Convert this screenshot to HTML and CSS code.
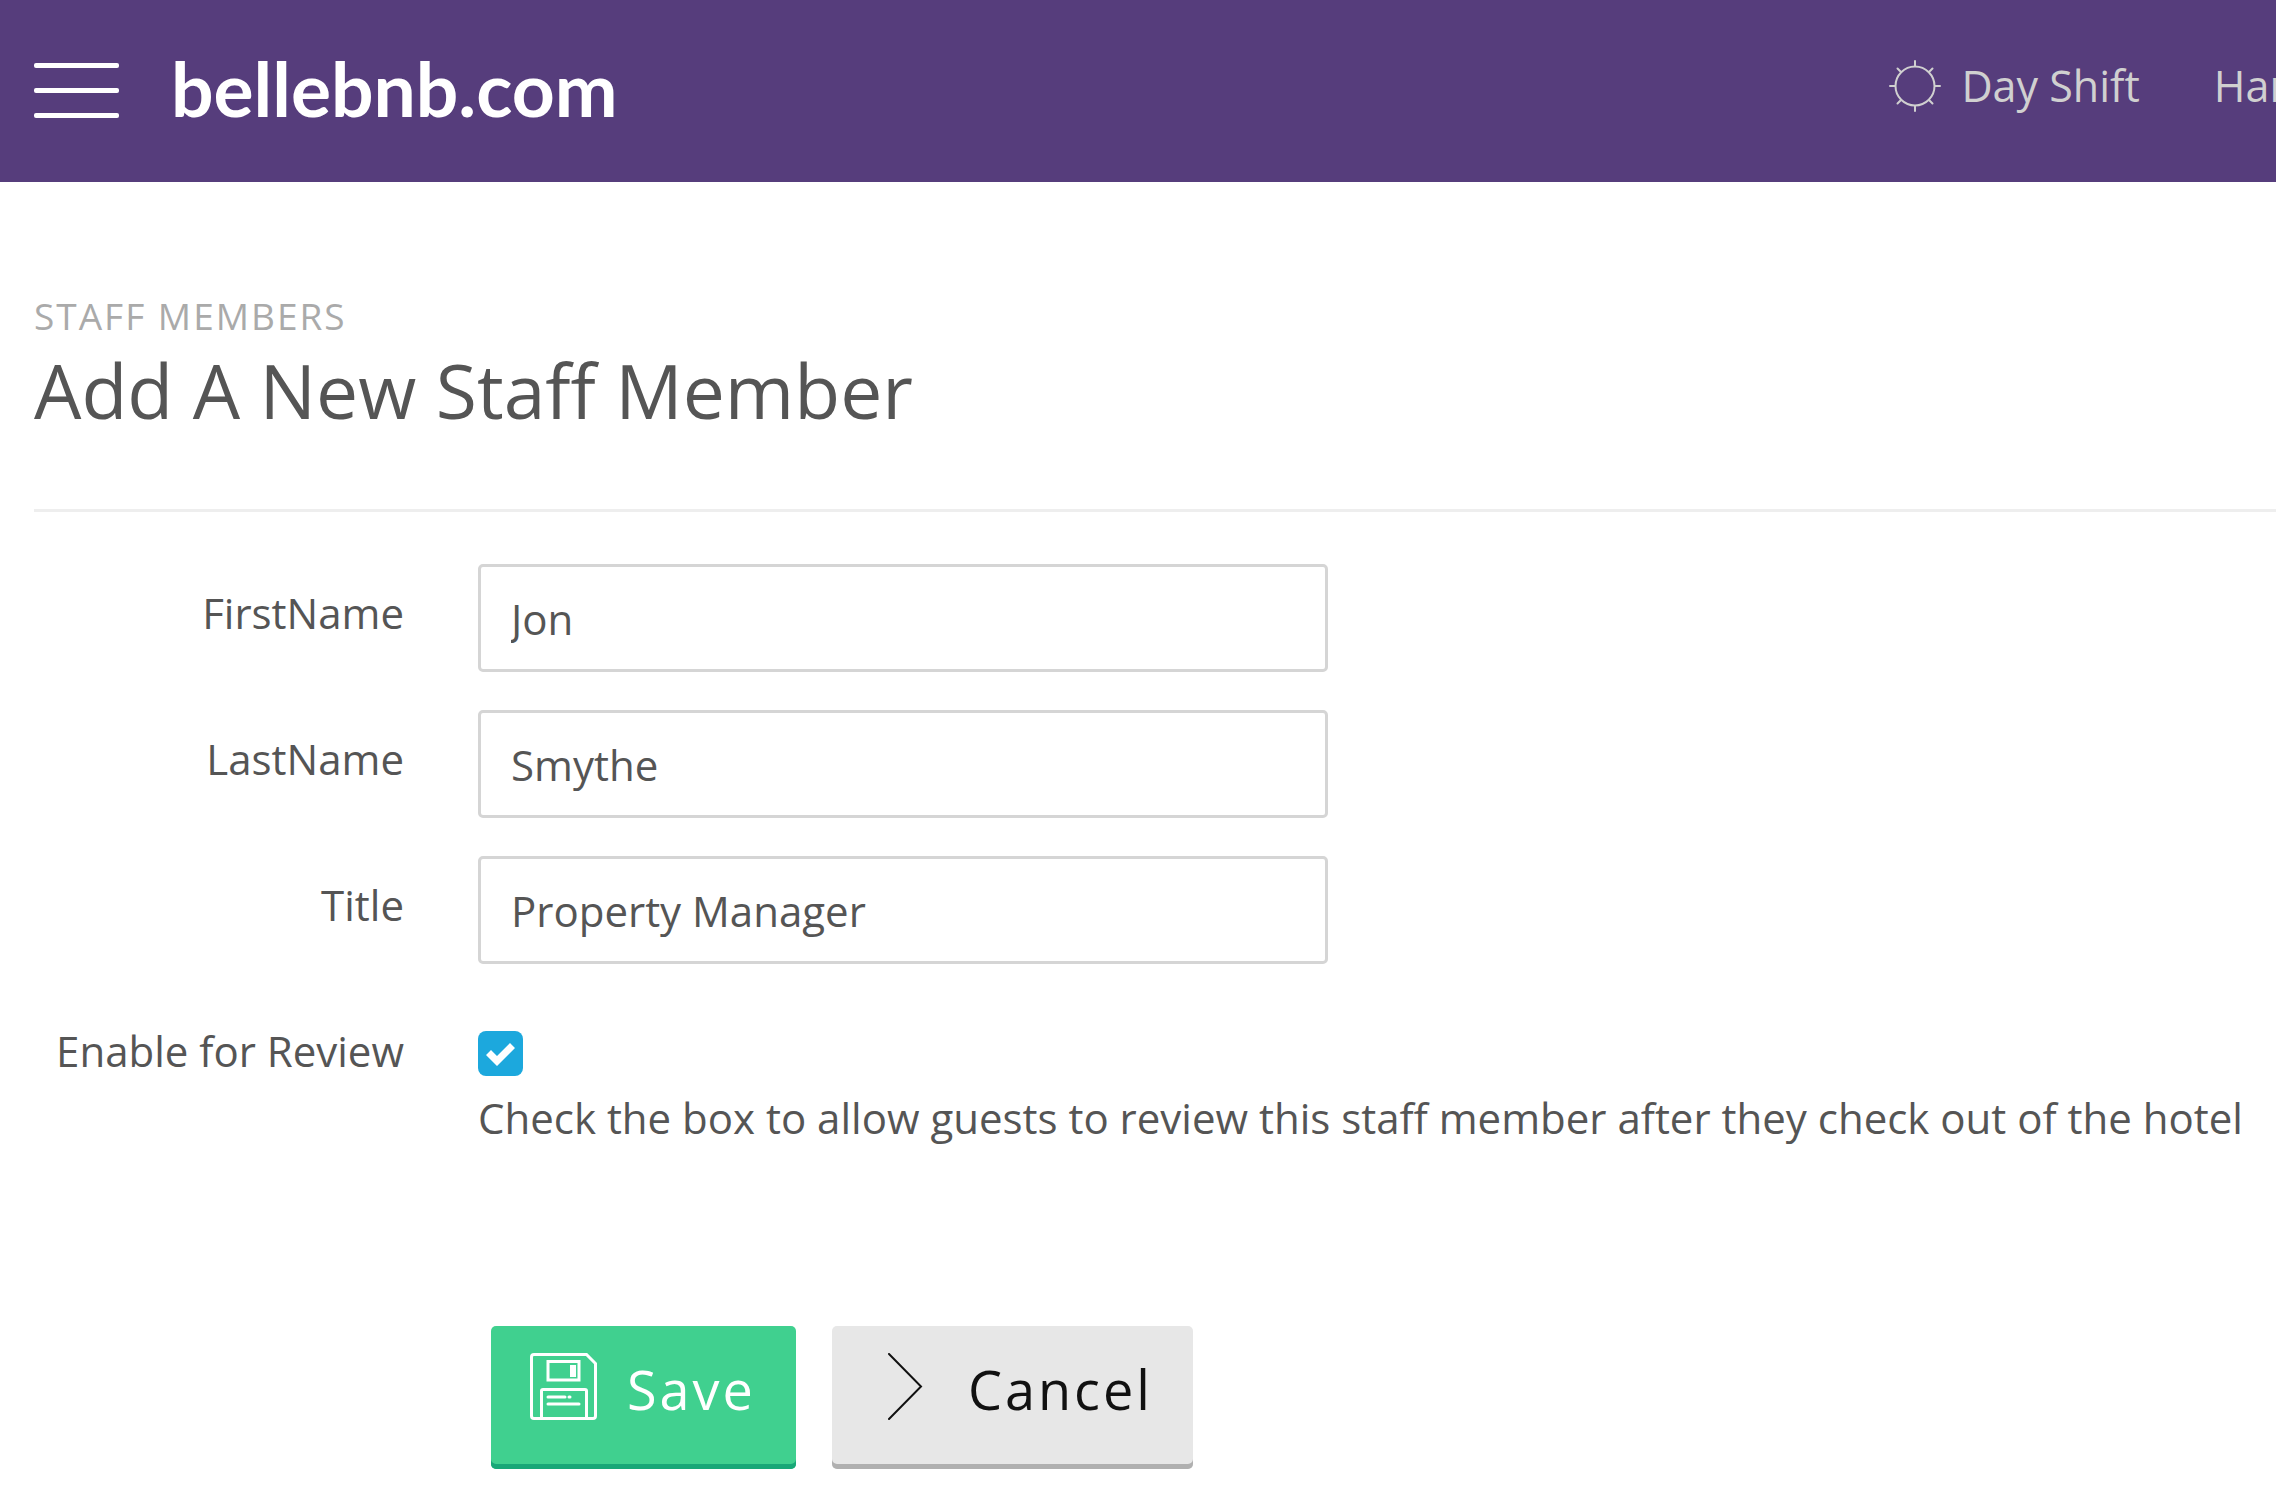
FILE: index.html
```html
<!DOCTYPE html>
<html lang="en">
<head>
    <meta charset="UTF-8">
    <title>Add A New Staff Member</title>
    <link rel="stylesheet" href="styles.css">
</head>
<body>

<header class="topbar">
    <button class="menu_btn" type="button" aria-label="Menu">
        <span class="bar"></span>
        <span class="bar"></span>
        <span class="bar"></span>
    </button>
    <a class="logo" href="#">bellebnb.com</a>
    <nav class="topnav">
        <a class="nav_link" href="#">
            <svg class="sun" viewBox="0 0 52 52">
                <circle cx="26" cy="26" r="19.5"/>
                <path d="M26 6V1M26 46v5M6 26H1M46 26h5M12 12L8.5 8.5M40 12l3.5-3.5M12 40l-3.5 3.5M40 40l3.5 3.5"/>
            </svg>
            Day Shift
        </a>
        <a class="nav_link" href="#">Har</a>
    </nav>
</header>

<main class="content">
    <div class="page_head">
        <p class="section_name">STAFF MEMBERS</p>
        <h1 class="page_title">Add A New Staff Member</h1>
    </div>

    <form class="staff_form">
        <div class="row">
            <label class="lbl" for="first_name">FirstName</label>
            <input class="txt" id="first_name" type="text" value="Jon">
        </div>
        <div class="row">
            <label class="lbl" for="last_name">LastName</label>
            <input class="txt" id="last_name" type="text" value="Smythe">
        </div>
        <div class="row">
            <label class="lbl" for="title">Title</label>
            <input class="txt" id="title" type="text" value="Property Manager">
        </div>
        <div class="row">
            <label class="lbl" for="review">Enable for Review</label>
            <div class="check_cell">
                <span class="check_wrap">
                    <input class="check" id="review" type="checkbox" checked>
                    <svg class="tick" viewBox="0 0 45 45"><path d="M8 24l5-5 6 6L32 12l5 5-18 18z"/></svg>
                </span>
                <p class="help">Check the box to allow guests to review this staff member after they check out of the hotel</p>
            </div>
        </div>
        <div class="actions">
            <button class="btn btn_save" type="submit">
                <svg class="icon" viewBox="0 0 67 67">
                    <path d="M4 1.500h52.500l9 9V63q0 2.500-2.500 2.500H4Q1.500 65.500 1.500 63V4Q1.500 1.500 4 1.500z"/>
                    <path d="M18 8.500h31v18.500H18zM11.500 65V38q0-1.500 1.500-1.500h42q1.500 0 1.500 1.500v27M18 44h17M39 44h1M18 51h31"/>
                    <path class="fill" d="M40 12h6v12h-6z"/>
                </svg>
                Save
            </button>
            <button class="btn btn_cancel" type="button">
                <svg class="icon" viewBox="0 0 67 67"><path d="M18 1l32 32.500L18 66"/></svg>
                Cancel
            </button>
        </div>
    </form>
</main>

</body>
</html>
```
FILE: styles.css
```css
* {
    box-sizing: border-box;
}

body {
    margin: 0;
    font-family: "Open Sans", sans-serif;
    font-size: 42px;
    line-height: 60px;
    color: #555;
    background-color: #fff;
    overflow-x: hidden;
}

/* top bar */
.topbar {
    display: flex;
    align-items: center;
    height: 182px;
    padding: 0 0 2px 34px;
    background-color: #563d7c;
    overflow: hidden;
    white-space: nowrap;
}

.menu_btn {
    display: flex;
    flex-direction: column;
    gap: 20px;
    width: 85px;
    padding: 0;
    border: 0;
    background: none;
}

.bar {
    height: 5px;
    border-radius: 2px;
    background-color: #fff;
}

.logo {
    margin-left: 52px;
    padding-bottom: 4px;
    font-family: Lato, "Open Sans", sans-serif;
    font-size: 75px;
    font-weight: bold;
    line-height: 84px;
    color: #fff;
    text-decoration: none;
}

.topnav {
    display: flex;
    gap: 74px;
    margin-left: auto;
    margin-right: -11px;
    padding-bottom: 8px;
    font-size: 43px;
}

.nav_link {
    display: flex;
    align-items: center;
    gap: 20px;
    color: #d0d0d0;
    text-decoration: none;
}

.sun {
    width: 52px;
    height: 52px;
    fill: none;
    stroke: #d0d0d0;
    stroke-width: 2;
    stroke-linecap: round;
}

/* page */
.content {
    padding: 107px 0 24px 34px;
}

.page_head {
    padding-bottom: 71px;
    border-bottom: 3px solid #eee;
}

.section_name {
    margin: 0;
    font-size: 37px;
    line-height: 54px;
    letter-spacing: 2px;
    color: #aaa;
}

.page_title {
    margin: 0;
    font-size: 75px;
    font-weight: normal;
    line-height: 95px;
}

.staff_form {
    display: flex;
    flex-direction: column;
    gap: 38px;
    padding-top: 52px;
}

.row {
    display: grid;
    grid-template-columns: 370px 1fr;
    column-gap: 74px;
}

.lbl {
    padding-top: 19px;
    text-align: right;
    white-space: nowrap;
}

.txt {
    width: 850px;
    height: 108px;
    padding: 0 30px;
    border: 3px solid #d5d5d5;
    border-radius: 5px;
    font-family: inherit;
    font-size: inherit;
    color: inherit;
    background-color: #fff;
}

.check_cell {
    padding-top: 29px;
}

.check_wrap {
    display: block;
    position: relative;
    width: 45px;
    height: 45px;
}

.check {
    display: block;
    width: 45px;
    height: 45px;
    margin: 0;
    border-radius: 8px;
    background-color: #1ca8dd;
    appearance: none;
}

.tick {
    position: absolute;
    inset: 0;
    fill: none;
    pointer-events: none;
}

.check:checked + .tick {
    fill: #fff;
}

.help {
    margin: 12px 0 0;
    white-space: nowrap;
}

/* buttons */
.actions {
    display: flex;
    gap: 36px;
    padding-top: 140px;
    padding-left: 457px;
}

.btn {
    display: flex;
    align-items: flex-start;
    gap: 30px;
    height: 143px;
    padding: 27px 40px 0 39px;
    border: 0;
    border-radius: 5px;
    font-family: inherit;
    font-size: 54px;
    line-height: 72px;
    letter-spacing: 3px;
}

.btn_save {
    color: #fff;
    background-color: #40d08f;
    box-shadow: inset 0 -5px #18a777;
}

.btn_cancel {
    color: #111;
    background-color: #e7e7e7;
    box-shadow: inset 0 -5px #b0b0b0;
}

.icon {
    width: 67px;
    height: 67px;
    fill: none;
    stroke: currentColor;
    stroke-width: 2;
    stroke-linecap: round;
}

.btn_save .icon {
    stroke-width: 3;
}

.fill {
    fill: currentColor;
    stroke: none;
}
```
